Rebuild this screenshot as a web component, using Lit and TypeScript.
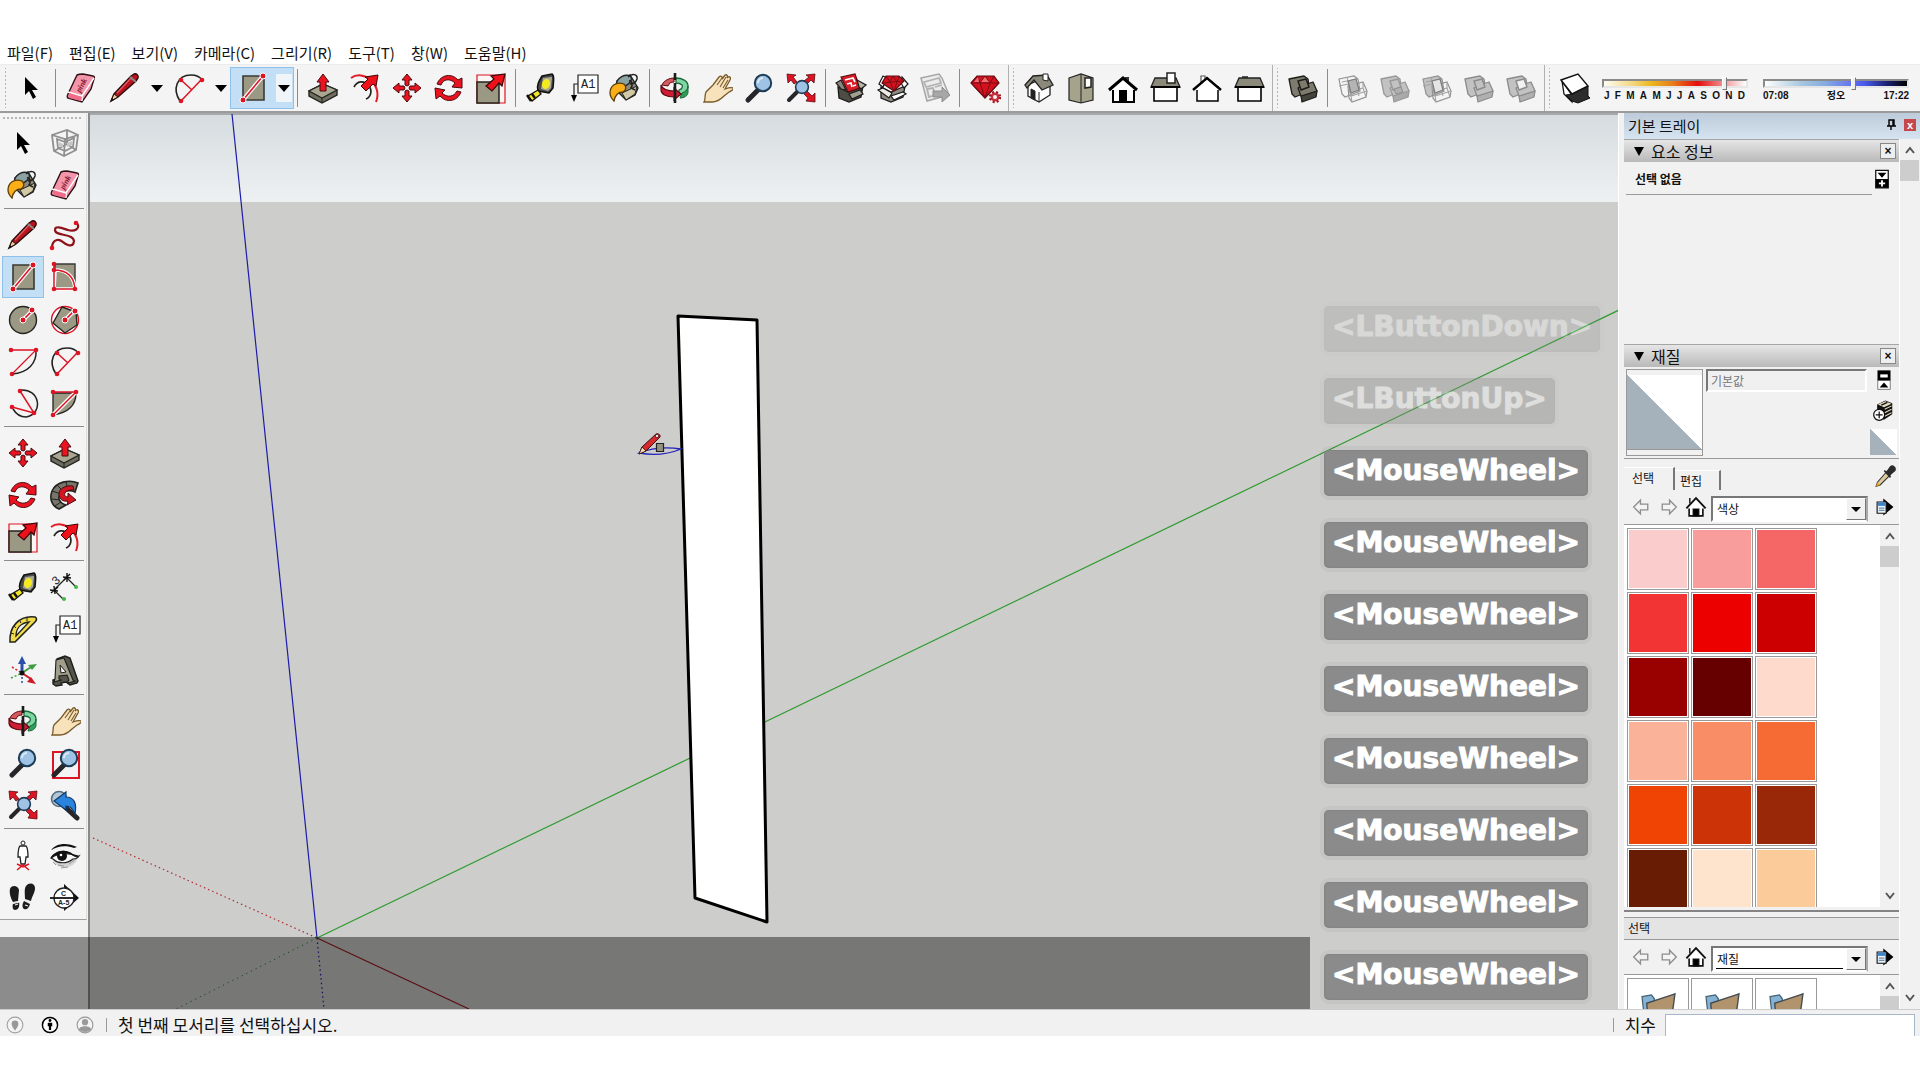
import { LitElement, html, css, svg, nothing } from "lit";
import { customElement, state } from "lit/decorators.js";
import { classMap } from "lit/directives/class-map.js";

const solid = (face: string, edge: string, stroke: string, mid = face) => svg`
  <path d="m2 7 15-3 4 3 2 12-15 6-3-3z" fill=${face} stroke=${stroke} stroke-width="1.3" stroke-linejoin="round"/>
  <path d="m14 24 16-5-1 6-14 5z" fill=${edge} stroke=${stroke} stroke-width="1.3" stroke-linejoin="round"/>
  <path d="m11 16 3-2 12-4 4 9-16 5z" fill=${face} stroke=${stroke} stroke-width="1.3" stroke-linejoin="round"/>
  <path d="m11 9 8-2 3 8-8 3z" fill=${mid} stroke=${stroke} stroke-width="1.5" stroke-linejoin="round"/>`;

const wire = (left: string, right: string, mid: string) => svg`
  <path d="m2 7 15-3 4 3 2 12-15 6-3-3z" fill=${left} stroke="#929292" stroke-width="1.2"/>
  <path d="m11 14 15-4 4 9-1 6-14 5-3-4z" fill=${right} stroke="#929292" stroke-width="1.2"/>
  <path d="m5 10 15-3M2 14l14-3M10 5l4 18M11 14l3 10 16-5M14 24l1 6M19 12l3 12M12 20l14-4 3 9M26 10v6" fill="none" stroke="#a2a2a2" stroke-width="1.1"/>
  <path d="m11 9 8-2 3 11-8 3z" fill=${mid} stroke="#7c7c7c" stroke-width="1.2"/>`;

const gem = (y: number) => svg`<g transform=${`translate(0 ${y})`}>
  <path d="m2 9 6-7h17l5 7-14 15z" fill="#d3121e" stroke="#5d0a10" stroke-width="1.2"/>
  <path d="M2 9h28l-14 15zM8 2l3 7 5-7 5 7 4-7M11 9l5 15 5-15" fill="none" stroke="#7a0d14" stroke-width="1"/>
  <path d="m9 3-4 5h5zM16 3l-4 5h8z" fill="#f26a72"/></g>`;

const dots = (pts: number[][], halo = false) =>
  pts.map(([x, y]) => svg`<circle cx=${x} cy=${y} r=${halo ? 3 : 2.3} fill="#dc1424" stroke=${halo ? "#fff" : "none"} stroke-width="1"/>`);

const lens = svg`
  <path d="m16 17-11 11" stroke="#26262a" stroke-width="5" stroke-linecap="round"/>
  <circle cx="20" cy="11" r="8.2" fill="#9fc3e4" stroke="#1d3c56" stroke-width="2"/>
  <path d="M15 11a5 5 0 0 1 5-5" fill="none" stroke="#dcebf7" stroke-width="2"/>`;

const bigArrow = svg`<path d="m30 2-3 12-3-3-7 8-6-5 8-7-3-3z" fill="#ee1119" stroke="#3a0508" stroke-width="1.2"/>`;

const ICONS: Record<string, unknown> = {
  select: svg`<path d="M10 5v18l4-4 4 8 3-2-4-7h6z" fill="#000"/>`,
  component: svg`<g fill="none" stroke="#8f8f8f" stroke-width="1.8"><path d="m3 8 15-5 11 5-2 15-12 6L5 24z"/><path d="m3 8 13 4 13-4M16 12l-1 17M18 3v14l9 6M18 17 5 24M8 12l8 3 9-4-1 9-8 4-7-3z"/></g><path d="m10 15 4 2v4l-4-2zM18 16l5-2v4l-5 2z" fill="#c6c6c6"/>`,
  paint: svg`
    <path d="M8 9 21 3l8 13-3 7-9 5-9-9z" fill="#8d8a7c" stroke="#222" stroke-width="1.4"/>
    <path d="m13 21 15-7-2 8-9 6z" fill="#d1c9a3" stroke="#222"/>
    <ellipse cx="15" cy="9" rx="8" ry="5" transform="rotate(-28 15 9)" fill="#8ba4a3" stroke="#222" stroke-width="1.4"/>
    <path d="M19 5c4-4 10-3 9 2-1 3-4 5-7 5" fill="none" stroke="#222" stroke-width="1.5"/>
    <path d="M20 9c3-1 4 4 2 7l4 2" fill="none" stroke="#222" stroke-width="1.6"/>
    <path d="M15 12C7 9 1 14 1 21c0 3 2 6 4 8 1-5 3-9 9-9 3-2 4-5 1-8z" fill="#fbae17" stroke="#5b3c05" stroke-width="1.3"/>`,
  eraser: svg`
    <path d="M12 3c2-1 4-1 6-1l10 2c1 0 2 1 1 3l-3 10-9 13-14-4c-1 0-1-2 0-4z" fill="#f595a9" stroke="#2d1016" stroke-width="1.4"/>
    <path d="m3 20 14 4 12-18M17 24v5" fill="none" stroke="#fff" stroke-width="1.4"/>
    <path d="M4 21 17 25l-1 4-12-3z" fill="#ef6d89"/>
    <text class="pink" x="11" y="20" transform="rotate(-62 14 17)">pink</text>`,
  pencil: svg`
    <path d="m22 4 3-2c2-1 5 1 4 4l-2 3L9 25l-7 4 3-7z" fill="#b8141e" stroke="#2a0b0c" stroke-width="1.4"/>
    <path d="m5 22 4 3-7 4z" fill="#e9cf9c" stroke="#2a0b0c"/><path d="m3 26 2 2-3 1z" fill="#111"/>
    <path d="M8 21 23 5" stroke="#e4565d" stroke-width="1.5"/><path d="m21 5 6 5" stroke="#8a8a8a" stroke-width="2"/>`,
  freehand: svg`<path d="M28 4c4 6-3 9-9 7S6 6 6 11s11 4 16 7 3 10-3 8-6-6-11-5c-4 1-5 4-5 8" fill="none" stroke="#8f1119" stroke-width="2.2"/>${dots([[27, 4], [3, 29]])}`,
  rect: svg`<path d="M6 4h21v24H6z" fill="#9b9983" stroke="#3a3a35" stroke-width="1.6"/><path d="M6 28 26 4" stroke="#fff" stroke-width="4"/><path d="M6 28 26 4" stroke="#dc1424" stroke-width="1.6"/>${dots([[6, 28], [26, 4]], true)}`,
  rotrect: svg`<path d="M6 3h20v24H6z" fill="#9b9983" stroke="#3a3a35" stroke-width="1.4"/><path d="M6 9c12 0 19 6 20 19H5z" fill="#9b9983" stroke="#fff" stroke-width="3.6"/><path d="M5 2v26h21C25 15 18 9 5 9" fill="none" stroke="#dc1424" stroke-width="1.5"/>${dots([[5, 3], [5, 9], [5, 28], [26, 28]])}`,
  circle: svg`<circle cx="16" cy="17" r="13.5" fill="#9b9983" stroke="#23231f" stroke-width="1.4"/><path d="m16 17 9-9" stroke="#fff" stroke-width="4"/><path d="m16 17 9-9" stroke="#dc1424" stroke-width="1.7"/>${dots([[16, 17], [25, 7]], true)}`,
  polygon: svg`<circle cx="16" cy="17" r="13.5" fill="#fff" stroke="#dc1424" stroke-width="1.4"/><path d="M13 4 27 9l1 13-12 8L4 20z" fill="#9b9983" stroke="#23231f" stroke-width="1.4"/><path d="m16 17 9-9" stroke="#fff" stroke-width="4"/><path d="m16 17 9-9" stroke="#dc1424" stroke-width="1.7"/>${dots([[16, 17], [26, 8]], true)}`,
  arc: svg`<path d="M29 5c1 13-8 23-24 24" fill="none" stroke="#23231f" stroke-width="1.5"/><path d="M4 5h25L5 29" fill="none" stroke="#dc1424" stroke-width="1.3"/>${dots([[4, 5], [29, 5], [5, 29]])}`,
  arc2: svg`<path d="M7 29C-1 17 4 3 18 3c6 0 9 2 11 5" fill="none" stroke="#23231f" stroke-width="1.6"/><path d="M8 29 28 8M8 8l11 10" fill="none" stroke="#dc1424" stroke-width="1.5"/>${dots([[8, 29], [29, 8], [8, 8]])}`,
  arc3: svg`<path d="M13 3c20-2 24 24 6 27-6 0-10-3-13-8" fill="none" stroke="#23231f" stroke-width="1.5"/><path d="m13 4 14 22L5 20" fill="none" stroke="#dc1424" stroke-width="1.5"/>${dots([[13, 4], [27, 26], [5, 20]])}`,
  pie: svg`<path d="M4 6h23c0 13-9 20-23 22z" fill="#9b9983" stroke="#23231f" stroke-width="1.3"/><path d="M4 28 27 5" stroke="#fff" stroke-width="4"/><path d="M4 5h23L4 28" fill="none" stroke="#dc1424" stroke-width="1.5"/>${dots([[4, 5], [27, 5], [4, 28]])}`,
  move: svg`<path d="m16 2 5 6h-3v5l-2 1-2-1V8h-3zM16 30l-5-6h3v-5l2-1 2 1v5h3zM2 16l6-5v3h5l1 2-1 2H8v3zM30 16l-6 5v-3h-5l-1-2 1-2h5v-3z" fill="#ea1420" stroke="#4a0a0e" stroke-width="1"/>`,
  push: svg`<path d="m2 19 14-7 14 6v5L15 31 2 24z" fill="#6e6d60" stroke="#23231f" stroke-width="1.4"/><path d="m2 19 14-7 14 6-15 8z" fill="#a9a791" stroke="#23231f" stroke-width="1.2"/><path d="M15 26v5" stroke="#23231f"/><path d="m16 2 6 8h-3v9h-6v-9h-3z" fill="#ea1420" stroke="#4a0a0e"/>`,
  rotate: svg`<g fill="#ea1420" stroke="#4a0a0e" stroke-width="1"><path d="M4 12C8 2 19 1 25 8l4-2v10l-10-1 3-4C17 6 10 7 8 13z"/><path d="M28 20c-4 10-15 11-21 4l-4 3-1-11 10 2-3 3c5 5 12 4 15-2z"/></g>`,
  followme: svg`<path d="M29 4c-9-4-22-1-26 8-3 8 0 15 7 18l7-4c-7-2-9-8-5-12 4-3 11-3 14-1z" fill="#77766a" stroke="#23231f" stroke-width="1.6"/><path d="m3 12 9 3M8 6l6 6M17 3l2 8M3 20l8 1M6 27l6-4" stroke="#23231f"/><path d="M24 7c-8-1-14 3-14 8s4 8 9 7l-1 4 9-5-8-7v4c-3 0-4-2-3-4 2-3 5-3 9-3z" fill="#d41623" stroke="#4a0a0e"/>`,
  scale: svg`<path d="M2 3h28v28H2z" fill="#fbf5f4" stroke="#dc1424" stroke-width="1.2"/><path d="M2 10h22v21H2z" fill="#9b9983" stroke="#23231f" stroke-width="1.5"/>${bigArrow}`,
  offset: svg`<path d="M2 6C14-3 34 12 27 30" fill="none" stroke="#e01c28" stroke-width="2"/><path d="M5 15c3-6 10-7 14-2 5 5 3 12-2 14" fill="none" stroke="#23231f" stroke-width="1.7"/><path d="m29 3-2 11-3-2-7 7-5-5 7-7-3-2z" fill="#ee1119" stroke="#3a0508"/>`,
  tape: svg`<path d="m17 4 10-2c2 1 2 4 1 14l-4 5-11-2c-2-5 1-10 4-15z" fill="#4b4b46" stroke="#111" stroke-width="1.5"/><path d="m18 6 9-1-1 11-3 3-7-2z" fill="#a9a99c"/><ellipse cx="21" cy="12" rx="4" ry="5" transform="rotate(20 21 12)" fill="#f4ea1e"/><path d="m13 18 3 4-9 7-4-5z" fill="#f1e524" stroke="#111" stroke-width="1.3"/><path d="m2 23 4 6M7 22l3 4" stroke="#111" stroke-width="2.4"/>`,
  dim: svg`<path d="m5 19 13-13" stroke="#23231f" stroke-width="1.2"/><path d="m5 19 9 9M18 7l8 8" stroke="#23231f" stroke-width="1.2"/><path d="m1 19 8 1M5 15l1 8M2 22l7-6M14 6l8 1M18 2v9M15 9l6-6" stroke="#111" stroke-width="1.400"/><text class="tag thin" x="3" y="13" transform="rotate(-42 7 9)">3</text><circle cx="15" cy="28" r="2" fill="#44b548"/><circle cx="27" cy="16" r="2" fill="#44b548"/>`,
  protractor: svg`<path d="M3 29C2 14 12 2 28 4c2 1 2 3 0 5L8 29z" fill="#f0dc4b" stroke="#23231f" stroke-width="1.6"/><path d="M9 23c0-8 5-13 13-14z" fill="#f3f3f3" stroke="#23231f" stroke-width="1.4"/><path d="m4 20 3 1M7 13l2 2M13 8l1 2M20 5v3" stroke="#23231f"/>`,
  label: svg`<path d="M11 3h20v18H11z" fill="#fff" stroke="#222" stroke-width="1.2"/><path d="M11 12H7v12" fill="none" stroke="#222" stroke-width="1.2"/><path d="m4 23 3 7 3-7z" fill="#000"/><text class="tag thin" x="14" y="16">A1</text>`,
  axes: svg`<path d="M15 18V8" stroke="#2a50a8" stroke-width="3"/><path d="m15 1 4 8h-8z" fill="#2a50a8"/><path d="m15 18 9-6" stroke="#3f9c42" stroke-width="2"/><path d="m30 9-5 6-4-5z" fill="#3f9c42"/><path d="m15 18 9 6" stroke="#cf1826" stroke-width="2"/><path d="m29 29-9-2 4-5z" fill="#cf1826"/><path d="M15 18v12" stroke="#2a50a8" stroke-width="1.5" stroke-dasharray="2 2"/><path d="m5 12 10 6" stroke="#cf1826" stroke-width="1.5" stroke-dasharray="2 2"/><path d="m4 23 9-4" stroke="#3f9c42" stroke-width="1.5" stroke-dasharray="2 2"/><circle cx="15" cy="18" r="2.5" fill="#111"/>`,
  text3d: svg`<path d="m8 4 8-3 5 2 8 23-1 2-7 2-4-3-5 1 1 2-6 1-3-2V25l3-1z" fill="#55544b" stroke="#1d1d1a" stroke-width="1.4"/><path d="m7 5 8-2 9 22 2 1-7 2v-2l1-1-2-5-8 1v3l2 1-7 2 1-3z" fill="#a09e8a" stroke="#1d1d1a" stroke-width="1.1"/><path d="m11 10 1 8 5-1z" fill="#f4f4f4" stroke="#1d1d1a"/>`,
  orbit: svg`<path d="M3 13c2-5 8-7 12-7v4c-3 0-5 1-6 4z" fill="#d4585c" stroke="#5d0a10"/><path d="M17 6c6 0 12 3 12 8 0 6-5 8-9 9v-5c3-1 4-3 3-5-2-2-4-2-6-2z" fill="#7fd6a0" stroke="#1e6a3d" stroke-width="1.3"/><path d="M23 21c3-1 6-3 6-7v6c0 4-4 6-8 6z" fill="#2f9e58" stroke="#1e6a3d"/><path d="M2 13c1 4 7 6 13 6v-3l7 6-7 6v-3C7 25 2 22 2 18z" fill="#cf1d33" stroke="#5d0a10" stroke-width="1.2"/><path d="M16 1v7M16 11v20" stroke="#1b1b1b" stroke-width="2.6"/>`,
  hand: svg`<path d="M3 30c2-3 0-6 2-10l7-7 6-8c2-2 4 0 3 2l3-4c2-1 3 1 2 3l1-1c2-1 3 1 2 3l-5 9c3-1 6-2 8-1 1 2-2 3-4 4l-5 4c-3 3-7 6-12 6z" fill="#f7e2bb" stroke="#7a5a2a" stroke-width="1.3"/><path d="m16 13 5-7M19 15l6-10M22 16l5-8" stroke="#7a5a2a" stroke-width="1.1"/>`,
  zoom: lens,
  zoomwin: svg`<path d="M4 5h26v26H4z" fill="none" stroke="#dc1424" stroke-width="2"/>${lens}`,
  zoomext: svg`<g fill="#dc1424" stroke="#5d0a10" stroke-width=".8"><path d="m2 2 9 1-3 2 4 5-3 2-3-4-3 3zM30 2l-1 9-3-3-4 4-3-3 5-4-3-2zM30 30l-9-1 2-3-4-4 3-3 5 5 3-3z"/></g><path d="m13 19-9 9" stroke="#26262a" stroke-width="4" stroke-linecap="round"/><circle cx="17" cy="15" r="6.4" fill="#9fc3e4" stroke="#1d3c56" stroke-width="1.6"/>`,
  previous: svg`<circle cx="10" cy="10" r="7.5" fill="#b4c9d8" stroke="#56707f" stroke-width="1.6"/><path d="m15 17 13 12" stroke="#26262a" stroke-width="5" stroke-linecap="round"/><path d="m5 12 12-9v5c8 0 11 6 9 17-3-6-5-8-9-8v4z" fill="#2a84dd" stroke="#143b66" stroke-width="1.2"/>`,
  poscam: svg`<circle cx="16" cy="4" r="2" fill="#fff" stroke="#222"/><path d="M13 7h6c2 2 2 6 2 11h-2l-1 7h-4l-1-7h-2c0-5 0-9 2-11z" fill="#fff" stroke="#222" stroke-width="1.3"/><path d="m10 31 6-5 6 5M10 25l6 3 6-3" fill="none" stroke="#dc1424" stroke-width="1.5"/>`,
  look: svg`<path d="M4 20c2 9 15 12 23 3l3-8-6 5z" fill="#d4d4d4"/><path d="M2 11c5-7 16-8 26-3l-3 1C17 6 9 7 2 11z" fill="#111"/><path d="M2 19c5-7 14-9 22-3 2 2 4 2 6 1-2 3-4 3-6 3-6 5-15 5-20 0z" fill="#f9f9f9" stroke="#222" stroke-width="1.200"/><path d="M2 19c5-7 14-9 22-3l5 1c-9-3-18-4-27 2z" fill="#111" stroke="#111" stroke-width="1.200"/><circle cx="13" cy="17" r="5" fill="#111"/><circle cx="12" cy="16" r="1.300" fill="#fff"/><path d="m4 23 3 3M9 26l6 1M20 25l7-5M12 29l7-1" stroke="#999"/>`,
  walk: svg`<g fill="#1c1c1c"><path d="M3 8c1-4 8-4 9 1l-1 11-5 1c-2-3-4-9-3-13zM6 23l6-2c1 5-1 8-4 8-2 0-3-3-2-6z"/><path d="M19 5c3-4 9-3 9 2 0 5-3 8-4 13l-6-2c0-5-1-10 1-13zM17 20l6 3c-1 4-3 6-6 5-2-1-2-5 0-8z"/></g><path d="m6 22 6-1M17 19l7 3M8 24l3-1M18 24l3 1" stroke="#e8e8e8" stroke-width="1.3"/>`,
  section: svg`<path d="M15 3 30 17 15 30z" fill="#111"/><circle cx="15" cy="17" r="10" fill="#fff" stroke="#222" stroke-width="1.3"/><path d="M1 17h27" stroke="#111" stroke-width="1.8"/><text class="mini" x="12" y="15">C</text><text class="mini" x="9" y="24">A-5</text>`,
  warehouse: svg`<path d="m3 15 10 5 15-6-2 11-12 5-10-4z" fill="#4f4c43" stroke="#1a1a1a" stroke-width="1.3"/><path d="m6 5 14-3 5 14-12 4z" fill="#d81c28" stroke="#5d0a10" stroke-width="1.2"/><path d="m10 8 8-2 2 4M12 12l4-1 1 4M18 14l3-1" fill="none" stroke="#fff" stroke-width="1.7"/><path d="m1 11 5-3 5 10-5-1z" fill="#8a877b" stroke="#1a1a1a" stroke-width="1.2"/><path d="m22 8 9 5-5 4-2-2z" fill="#b9b5a2" stroke="#1a1a1a" stroke-width="1.2"/><path d="m14 22 11-4 3 4-11 5z" fill="#a29f8f" stroke="#1a1a1a" stroke-width="1.2"/>`,
  gembox: svg`<path d="m4 15 10 5 14-6-2 11-12 5-10-4z" fill="#8f8c80" stroke="#1a1a1a" stroke-width="1.3"/><path d="m2 12 4-8 4 2-4 9zM25 5l6 7-4 4-3-5z" fill="#fff" stroke="#1a1a1a" stroke-width="1.2"/><path d="m5 11 4-7h13l5 5-10 10z" fill="#d3121e" stroke="#5d0a10" stroke-width="1.2"/><path d="M5 11l22-2M9 4l4 6 3-6 4 6 2-6M13 10l4 9 3-9" fill="none" stroke="#7a0d14"/><path d="m1 18 5-2 9 5-3 5z" fill="#eceae2" stroke="#1a1a1a" stroke-width="1.2"/><path d="m14 24 12-4 3 2-12 6z" fill="#fff" stroke="#1a1a1a" stroke-width="1.2"/>`,
  layout: svg`<path d="m2 6 18-4 3 4 7 17-22 6z" fill="#ececec" stroke="#a5a5a5" stroke-width="1.5"/><path d="m5 10 15-4 2 5-15 4zM8 17l6-1 2 7-6 2zM16 15l7-2" fill="none" stroke="#b1b1b1" stroke-width="1.8"/><path d="M14 19h9v-4l8 8-8 7v-5h-9z" fill="#a7a7a7" stroke="#8e8e8e"/>`,
  ruby: svg`${gem(2)}<circle cx="26" cy="25" r="5" fill="#c8323d" stroke="#fff" stroke-width="1"/><circle cx="26" cy="25" r="5" fill="none" stroke="#a3141f" stroke-width="2.4" stroke-dasharray="2 2"/><circle cx="26" cy="25" r="2" fill="#f4f4f4"/>`,
  iso: svg`<path d="M5 13v11l11 6 11-7V12l-7-6z" fill="#fff" stroke="#222" stroke-width="1.3"/><path d="m2 13 8-9 14-1 6 10-11 5-8-10-7 8z" fill="#8a897a" stroke="#222" stroke-width="1.3"/><path d="M16 20v10M8 17l4 2v9l-4-2z" fill="#222" stroke="#222"/><path d="M20 2h5v7l-5-1z" fill="#fff" stroke="#222"/>`,
  top: svg`<path d="m4 6 12-4 12 4v22l-12 3-12-3z" fill="#a5a38c" stroke="#222" stroke-width="1.2"/><path d="M16 2v29" stroke="#222"/><path d="M20 6h6v9l-6 1z" fill="#fff" stroke="#222" stroke-width="1.5"/>`,
  front: svg`<path d="M6 15h21v15H6z" fill="#fff" stroke="#000" stroke-width="2"/><path d="M18 5h4v5h-4z" fill="#333"/><path d="m2 18 14-12 14 12" fill="#fff" stroke="#000" stroke-width="3"/><path d="M12 18h8v12h-8z"/>`,
  right: svg`<path d="M5 14h23v15H5z" fill="#fff" stroke="#000" stroke-width="1.600"/><path d="M6 6h21l4 9H2z" fill="#8a897a" stroke="#222" stroke-width="1.3"/><path d="M2 15h29" stroke="#000" stroke-width="2"/><path d="M18 1h8v10h-8z" fill="#fff" stroke="#222" stroke-width="1.5"/>`,
  back: svg`<path d="M6 15h21v14H6z" fill="#fff" stroke="#000" stroke-width="1.500"/><path d="M10 4h4v8h-4z" fill="#fff" stroke="#555" stroke-width="1.200"/><path d="m2 18 14-12 14 12" fill="#fff" stroke="#000" stroke-width="2.400"/>`,
  left: svg`<path d="M5 14h23v15H5z" fill="#fff" stroke="#000" stroke-width="1.600"/><path d="M9 4h6v3H9z" fill="#555"/><path d="M6 6h21l4 9H2z" fill="#8a897a" stroke="#222" stroke-width="1.300"/><path d="M2 15h29" stroke="#000" stroke-width="2"/>`,
  shell: solid("#7d7b6d", "#45443c", "#1d1d1a"),
  intersect: wire("none", "none", "#b4b4b4"),
  union: svg`${solid("#c2c2c2", "#aaa", "#999")}<path d="m15 17 7-2 2 5-7 2z" fill="#b0b0b0" stroke="#8f8f8f"/>`,
  subtract: wire("#c2c2c2", "none", "#e4e4e4"),
  trim: solid("#c2c2c2", "#b0b0b0", "#8c8c8c"),
  split: solid("#c2c2c2", "#b0b0b0", "#8c8c8c", "#f2f2f2"),
  shadow: svg`<path d="m3 9 10 14v7l-8-8z" fill="#fff" stroke="#111" stroke-width="1.3"/><path d="m13 22 16-8v10l2 2-12 5-6-2-6-6z" fill="#2c2c2c" stroke="#111"/><path d="M2 8 19 2l10 12-16 8z" fill="#fff" stroke="#111" stroke-width="1.4"/>`,
  addbox: svg`<path d="M6 8 18 2l10 4v16l-12 8-10-5z" fill="#111"/><path d="m9 8 9-4 7 3-9 4zM17 15l10-5M17 20l10-5M17 25l10-5" fill="#e6dfc0" stroke="#e6dfc0" stroke-width="1.5"/><path d="m12 9 9-4" stroke="#111" stroke-width="2"/><circle cx="9" cy="23" r="8" fill="#fff" stroke="#111" stroke-width="1.800"/><path d="M9 18v10M4 23h10" stroke="#111" stroke-width="1.8"/>`,
  dropper: svg`<path d="m19 9 5 5L9 29l-6 2 2-6z" fill="#dccb9c" stroke="#333" stroke-width="1.500"/><path d="m5 25 4 4-6 2z" fill="#e7a512"/><path d="m15 8 9 10M19 10l5-7c3-3 8 1 6 5l-7 6z" fill="#2b2b2b" stroke="#2b2b2b" stroke-width="2.5"/>`,
  home: svg`<path d="M6 16v13h20V16" fill="#fff" stroke="#111" stroke-width="2.400"/><path d="m2 18 14-15 14 15" fill="#fff" stroke="#111" stroke-width="2.800"/><path d="M7 11V3M12 19h8v10h-8z" stroke="#111" stroke-width="2"/>`,
  prevArrow: svg`<path d="M3 16 15 4v7h13v10H15v7z" fill="#f4f4f4" stroke="#8e8e8e" stroke-width="2.400"/>`,
  nextArrow: svg`<path d="M29 16 17 4v7H4v10h13v7z" fill="#f4f4f4" stroke="#8e8e8e" stroke-width="2.400"/>`,
  details: svg`<path d="M13 1 31 16 13 31z" fill="#000"/><path d="M2 7h16v20H2z" fill="#eaf2fa" stroke="#111" stroke-width="2"/><path d="M3 8h14v6H3z" fill="#3d83c9"/><path d="M5 18h10M5 22h10" stroke="#6d8ca8" stroke-width="2"/>`,
  pane: svg`<path d="M6 2h20v28H6z" fill="#fff" stroke="#111" stroke-width="2"/><path d="M6 16h20v14H6z" fill="#000"/><path d="M9 6h14l-7 8z"/><path d="M16 18v10M11 23h10" stroke="#fff" stroke-width="3"/>`,
  paneUp: svg`<path d="M6 1h20v30H6z" fill="#fff" stroke="#777" stroke-width="1.500"/><path d="M6 1h20v16H6z" fill="#000"/><path d="M10 7h12v5H10z" fill="#fff"/><path d="m16 20 7 8H9z"/>`,
  folder: svg`<path d="m2 5 10-2 3 4 2 25H5z" fill="#85b3d6" stroke="#44606f" stroke-width="1.300"/><path d="M7 12 34 3l3-1-4 30H9z" fill="#b1946d" stroke="#454d52" stroke-width="1.500"/>`,
  geo: svg`<circle cx="16" cy="16" r="14" fill="#f4f4f4" stroke="#a3a3a3" stroke-width="2"/><path d="M16 26c-3-5-6-8-6-12a6 6 0 0 1 12 0c0 4-3 7-6 12z" fill="#989898"/>`,
  credit: svg`<circle cx="16" cy="16" r="13.500" fill="#fff" stroke="#000" stroke-width="2.600"/><circle cx="16" cy="8" r="2.500"/><path d="M12 12h8v6h-2v7h-4v-7h-2z"/>`,
  user: svg`<circle cx="16" cy="16" r="14" fill="#f4f4f4" stroke="#999" stroke-width="2"/><circle cx="16" cy="11" r="5.500" fill="#999"/><path d="M5 24c1-8 21-8 22 0-5 6-17 6-22 0z" fill="#999"/>`,
};

const icon = (name: string, cls = "") =>
  html`<svg class="icon ${cls}" viewBox="0 0 32 32" aria-hidden="true">${ICONS[name]}</svg>`;

const chevron = (down: boolean) =>
  html`<svg class="chev" viewBox="0 0 10 8" aria-hidden="true"><path d=${down ? "M1 1l4 5 4-5" : "M1 7l4-5 4 5"} /></svg>`;

type Tool = [string, string];
const SEP: Tool = ["|", ""];

const MENUS = ["파일(F)", "편집(E)", "보기(V)", "카메라(C)", "그리기(R)", "도구(T)", "창(W)", "도움말(H)"];

const MAIN_TOOLS: Tool[] = [
  ["select", "선택"], SEP, ["eraser", "지우개"], ["pencil+", "선"], ["arc2+", "호"], ["rect+", "직사각형"], SEP,
  ["push", "밀기/끌기"], ["offset", "오프셋"], ["move", "이동"], ["rotate", "회전"], ["scale", "배율"], SEP,
  ["tape", "줄자"], ["label", "텍스트"], ["paint", "페인트 통"], SEP,
  ["orbit", "궤도"], ["hand", "이동 보기"], ["zoom", "확대/축소"], ["zoomext", "범위 확대"], SEP,
  ["warehouse", "3D Warehouse"], ["gembox", "Extension Warehouse"], ["layout", "LayOut"], SEP, ["ruby", "확장"],
];
const VIEW_TOOLS: Tool[] = [["iso", "등각"], ["top", "위"], ["front", "앞"], ["right", "오른쪽"], ["back", "뒤"], ["left", "왼쪽"]];
const SOLID_TOOLS: Tool[] = [["shell", "외부 쉘"], SEP, ["intersect", "교차"], ["union", "결합"], ["subtract", "빼기"], ["trim", "자르기"], ["split", "분할"]];

const SIDE_TOOLS: Tool[][] = [
  [["select", "선택"], ["component", "구성 요소"], ["paint", "페인트 통"], ["eraser", "지우개"]],
  [["pencil", "선"], ["freehand", "자유선"], ["rect", "직사각형"], ["rotrect", "회전 직사각형"], ["circle", "원"], ["polygon", "다각형"], ["arc", "호"], ["arc2", "2점 호"], ["arc3", "3점 호"], ["pie", "파이"]],
  [["move", "이동"], ["push", "밀기/끌기"], ["rotate", "회전"], ["followme", "따라가기"], ["scale", "배율"], ["offset", "오프셋"]],
  [["tape", "줄자"], ["dim", "치수"], ["protractor", "각도기"], ["label", "텍스트"], ["axes", "축"], ["text3d", "3D 텍스트"]],
  [["orbit", "궤도"], ["hand", "이동 보기"], ["zoom", "확대/축소"], ["zoomwin", "확대 창"], ["zoomext", "범위 확대"], ["previous", "이전"]],
  [["poscam", "카메라 배치"], ["look", "둘러보기"], ["walk", "걷기"], ["section", "단면"]],
];

const SWATCHES = [
  "#fbcccc", "#f99c9c", "#f56666", "#f23434", "#ec0000", "#cc0000", "#990000", "#660000", "#fddacc",
  "#fab299", "#f98e66", "#f66a34", "#f04404", "#cc3408", "#992808", "#681c04", "#fee4cc", "#fbcc99",
];

const KEYS: [string, string][] = [
  ["<LButtonDown>", "fade-most"], ["<LButtonUp>", "fade"],
  ...Array.from({ length: 8 }, () => ["<MouseWheel>", ""] as [string, string]),
];

@customElement("app-root")
export class AppRoot extends LitElement {
  @state() private tool = "rect";
  @state() private tab = "선택";

  static styles = css`
    :host { display: block; font-family: "Noto Sans CJK KR", "Noto Sans", sans-serif; color: #111; }
    * { box-sizing: border-box; }
    button { font: inherit; color: inherit; background: none; border: 0; padding: 0; margin: 0; display: flex; align-items: center; justify-content: center; }
    .page { height: 100vh; display: flex; flex-direction: column; background: #fff; padding: 41px 0 44px; overflow: hidden; }
    .icon { width: 32px; height: 32px; display: block; }
    .pink { font: italic 700 8px "Liberation Serif", serif; fill: #7c1630; }
    .tag { font: 700 12px "Liberation Mono", monospace; fill: #222; }
    .tag.thin { font-weight: 400; }
    .mini { font: 700 7px "Liberation Sans", sans-serif; fill: #222; }

    .menu { display: flex; gap: 16px; padding: 0 7px; height: 23px; font-size: 15px; line-height: 24px; }
    .menu button { white-space: nowrap; line-height: 24px; }

    .bars { display: flex; height: 49px; background: #f4f4f4; border-top: 1px solid #ececec; border-bottom: 2px solid #9b9b9b; }
    .group { display: flex; align-items: center; padding-right: 2px; border-right: 1px solid #b0b0b0; }
    .group:first-child { padding-left: 1px; }
    .group:last-child { flex: 1; border-right: 0; }
    .grip { width: 9px; align-self: stretch; margin: 3px 0; background: radial-gradient(circle, #b5b5b5 1px, transparent 1px) center / 9px 4px repeat-y; }
    .tool { width: 42px; height: 42px; }
    .sep { width: 1px; height: 38px; background: #8c8c8c; margin: 0 4px 0 3px; }
    .combo { display: flex; width: 64px; height: 42px; }
    .combo .tool { width: 46px; }
    .drop { width: 18px; }
    .tri { border: 6px solid transparent; border-top: 7px solid #000; border-bottom: 0; }
    .combo.on, .side .on { background: #c3dff5; box-shadow: inset 0 0 0 1px #8fc0ea; }
    .combo.on .drop { align-self: center; width: 16px; height: 28px; background: #f0f5fa; margin-left: 0; }
    .time { display: flex; gap: 15px; padding: 12px 9px 0 6px; align-self: flex-start; flex: 1; }
    .scale { flex: 1; min-width: 0; display: flex; flex-direction: column; font: 700 10px/12px "Liberation Sans", "Noto Sans CJK KR", sans-serif; }
    .ticks { display: flex; justify-content: space-between; padding: 0 3px 0 2px; }
    .ticks.wide { padding: 0; }
    .range { appearance: none; -webkit-appearance: none; width: 100%; height: 13px; margin: 0; background: none; display: block; }
    .range::-webkit-slider-runnable-track { height: 9px; border: 2px solid; border-color: #8a8a8a #e6e6e6 #e6e6e6 #8a8a8a; }
    .months::-webkit-slider-runnable-track { background: linear-gradient(90deg, #fffdf4, #f3d680 20%, #ecb820 33%, #e87f1a 48%, #e60c0c 66%, #f0a0a0 86%, #fff); }
    .hours::-webkit-slider-runnable-track { background: linear-gradient(90deg, #fff, #a5c6de 26%, #86ace0 42%, #6a7cec 58%, #4a5aec 70%, #1a2070 86%, #000); }
    .range::-webkit-slider-thumb { -webkit-appearance: none; width: 5px; height: 13px; margin-top: -4px; background: #f0f0f0; border: 1px solid; border-color: #fff #777 #777 #fff; }

    .main { flex: 1; min-height: 0; display: flex; position: relative; background: #f1f1f1; }
    .side { width: 90px; padding: 1px 0 0; border-right: 2px solid #8a8a8a; background: #f1f1f1; }
    .palette { width: 87px; padding: 0 0 1px 2px; background: #f4f4f4; border-bottom: 1px solid #a0a0a0; border-right: 1px solid #ddd; }
    .hgrip { height: 8px; margin-right: 3px; background: radial-gradient(circle, #b5b5b5 1px, transparent 1px) left center / 4px 8px repeat-x; }
    .cells { display: grid; grid-template-columns: 42px 42px; }
    .hsep { height: 1px; margin: 2px 2px 5px; background: #8c8c8c; }

    .view { flex: 1; min-width: 0; position: relative; overflow: hidden; background: #cdcdcc; border-right: 1px solid #fff; }
    .scene { position: absolute; inset: 0; width: 100%; height: 100%; display: block; }
    .keys { position: absolute; right: 14px; bottom: 9px; width: 280px; display: flex; flex-direction: column; align-items: flex-start; gap: 26px; }
    .key { height: 46px; padding: 0 8px; border-radius: 5px; background: #8b8b8b; color: #fff; font: 700 28px/42px "DejaVu Sans", sans-serif; -webkit-text-stroke: 1px #fff; box-shadow: 0 0 0 4px rgba(0, 0, 0, .035), inset 0 0 2px #777; white-space: nowrap; }
    .fade { opacity: .34; }
    .fade-most { opacity: .22; }
    .shade { position: absolute; left: 0; bottom: 0; width: 1310px; height: 72px; background: rgba(0, 0, 0, .42); }

    .tray { width: 301px; display: flex; flex-direction: column; padding-left: 5px; background: #f1f1f1; font-size: 12px; min-height: 0; }
    .title { display: flex; align-items: center; height: 26px; padding: 0 4px 2px 4px; background: linear-gradient(#bdcbda, #d6e3f0); font-size: 15px; flex: none; }
    .title span { flex: 1; }
    .pin { width: 12px; height: 12px; margin-right: 7px; }
    .x { width: 12px; height: 12px; background: #c4484c; color: #fff; font: 700 11px/12px "Liberation Sans", sans-serif; }
    .body { flex: 1; min-height: 0; display: flex; padding-right: 1px; }
    .stack { flex: 1; min-width: 0; display: flex; flex-direction: column; border-right: 1px solid #fff; }
    .bar { display: flex; align-items: center; gap: 7px; height: 23px; flex: none; padding: 0 3px 0 10px; background: linear-gradient(#e6e6e6, #b9b9b9); border-top: 1px solid #a5a5a5; font-size: 16px; line-height: 20px; }
    .bar .tri { border-width: 9px 5px 0; }
    .bar span { flex: 1; }
    .bar button { width: 16px; height: 16px; background: #eee; border: 1px solid #888; font: 700 12px/12px "Liberation Sans", sans-serif; }
    .info { height: 182px; flex: none; padding: 4px 7px 0 2px; }
    .info-row { display: flex; justify-content: space-between; align-items: center; height: 28px; padding: 0 0 3px 9px; font-weight: 700; }
    .info hr { border: 0; height: 1px; background: #9a9a9a; margin: 0 20px 0 0; }
    .icon.xs { width: 18px; height: 18px; }
    .icon.sm { width: 20px; height: 20px; }
    .icon.md { width: 22px; height: 22px; }
    .mat { display: flex; gap: 3px; height: 92px; flex: none; padding: 2px 2px 3px; border-bottom: 1px solid #999; }
    .preview { width: 77px; height: 87px; padding: 5px 0; border: 1px solid #999; }
    .diag { height: 100%; background: linear-gradient(to top right, #a5b2bc 50%, #fff 50%); }
    .preview .diag { border-bottom: 1px solid #999; }
    .name { flex: 1; min-width: 0; height: 23px; border: 2px solid; border-color: #777 #fff #fff #777; background: #f0f0f0; color: #777; font: 12px "Noto Sans CJK KR", sans-serif; padding: 0 3px; }
    .acts { width: 27px; display: flex; flex-direction: column; align-items: center; justify-content: space-between; padding-top: 1px; }
    .acts .diag { width: 27px; height: 26px; }
    .tabs { display: flex; align-items: flex-end; height: 31px; flex: none; padding-right: 3px; }
    .tabs .tab { width: 46px; height: 20px; justify-content: flex-start; padding-left: 5px; border-top: 1px solid #fff; border-right: 2px solid #777; font-size: 12px; }
    .tabs .tab.on { width: 51px; height: 23px; padding: 0 0 3px 8px; }
    .tabs .pick { margin-left: auto; padding-bottom: 3px; }
    .nav { display: flex; align-items: center; height: 35px; flex: none; padding: 0 3px 1px 8px; border-bottom: 1px solid #999; }
    .nav .icon { width: 18px; height: 18px; }
    .nav .icon.home { width: 22px; height: 22px; }
    .nav button { width: 27px; }
    .nav button:first-child { width: 18px; margin-right: 5px; }
    .nav button:last-child { width: 22px; margin-left: 6px; }
    .nav button:last-child .icon { width: 18px; height: 20px; }
    .pickbox { flex: 1; min-width: 0; height: 26px; display: flex; align-self: flex-end; align-items: center; border: 2px solid; border-color: #777 #aaa #fff #777; background: #fff; margin: 0 0 1px 2px; }
    .pickbox select { flex: 1; min-width: 0; appearance: none; border: 0; background: none; padding: 0 4px; font: 12px/18px "Noto Sans CJK KR", sans-serif; color: #111; height: 20px; }
    .pickbox.line select { margin: 0 3px; padding: 0 1px; border-bottom: 1px solid #000; }
    .pickbox .arrow { width: 20px; height: 22px; display: flex; align-items: center; justify-content: center; background: #f1f1f1; border: 1px solid; border-color: #fff #777 #777 #fff; }
    .arrow .tri { border-width: 5px 5px 0; }
    .list { display: flex; min-height: 0; background: #fff; overflow: hidden; }
    .colors { flex: 1; }
    .folders { flex: none; height: 34px; }
    .grid { flex: 1; display: grid; grid-template-columns: repeat(auto-fill, 62px); grid-auto-rows: 62px; gap: 2px; padding: 3px; align-content: start; }
    .sw { border: 1px solid #999; background: #fff; padding: 1px; align-items: stretch; justify-content: stretch; }
    .sw i { flex: 1; display: block; }
    .sw svg { width: 36px; height: 32px; margin: 12px auto 0; overflow: visible; }
    .scroll { width: 19px; flex: none; display: flex; flex-direction: column; align-items: center; background: #f1f1f1; }
    .scroll .chev { margin: 7px 0 6px; }
    .thumb { width: 100%; height: 21px; background: #cdcdcd; }
    .scroll .chev:last-child { margin: auto 0 7px; }
    .chev { width: 10px; height: 8px; flex: none; }
    .chev path { fill: none; stroke: #555; stroke-width: 2; }
    .split { flex: none; height: 8px; border-top: 2px solid #848484; border-bottom: 1px solid #999; margin-top: 3px; }
    .sub { flex: none; height: 22px; padding-left: 4px; background: #e4e4e4; border-bottom: 1px solid #999; line-height: 20px; }

    .status { display: flex; align-items: center; height: 27px; flex: none; background: #f1f1f1; border-top: 1px solid #ccc; padding: 4px 5px 0 6px; font-size: 17px; line-height: 22px; }
    .status .ids { display: flex; gap: 17px; }
    .status .bar-sep { width: 1px; height: 14px; background: #999; margin: 0 11px 0 12px; }
    .status .msg { flex: 1; }
    .status label { padding-right: 9px; }
    .vcb { width: 250px; align-self: stretch; border: 1px solid #a9b8c8; border-bottom: 0; background: #fff; font-size: 14px; }
  `;

  private toolButton([id, label]: Tool) {
    if (id === "|") return html`<span class="sep"></span>`;
    const name = id.replace("+", "");
    const button = html`<button class="tool" aria-label=${label} @click=${() => (this.tool = name)}>${icon(name)}</button>`;
    if (!id.endsWith("+")) return button;
    return html`<div class=${classMap({ combo: true, on: this.tool === name })}>
      ${button}<button class="drop" aria-label="${label} 옵션"><span class="tri"></span></button>
    </div>`;
  }

  private group(tools: Tool[]) {
    return html`<div class="group"><span class="grip"></span>${tools.map((t) => this.toolButton(t))}</div>`;
  }

  private scene() {
    return html`<svg class="scene" viewBox="90 113 1528 896" preserveAspectRatio="xMinYMin slice" role="img" aria-label="모델링 화면">
      <defs><linearGradient id="sky" x1="0" y1="0" x2="0" y2="1"><stop offset="0" stop-color="#d5dbdf"/><stop offset="1" stop-color="#eef1f2"/></linearGradient></defs>
      <rect x="89" y="113" width="1530" height="896" fill="#cdcdcc"/>
      <rect x="89" y="113" width="1530" height="89" fill="url(#sky)"/>
      <path d="M89 114h1530" stroke="#777"/>
      <g fill="none" stroke-width="1.200">
        <path d="M232 114 317 938" stroke="#1c1ca8"/>
        <path d="M317 938 1619 310" stroke="#2c9a2c"/>
        <path d="m317 938 152 71" stroke="#9c1d22"/>
        <g stroke-dasharray="1.500 3"><path d="M93 838 317 938" stroke="#b02a30"/><path d="m317 938 7 71" stroke="#1c1ca8"/></g>
        <path d="M317 938 176 1009" stroke="#1f7a1f" stroke-width="1" stroke-dasharray="1.200 4"/>
      </g>
      <path d="m678 316 79 4 10 602-72-24z" fill="#fff" stroke="#000" stroke-width="3" stroke-linejoin="round"/>
      <path d="M639 453c10-4 22-7 42-4-12 5-26 7-42 4z" fill="none" stroke="#2323b8" stroke-width="1.300"/>
      <path d="M656.500 443.500h7v8h-7z" fill="#94927e" stroke="#222" stroke-width="1.200"/>
      <path d="m639 454 3-7 14-13c2-1 5 1 4 3l-14 14z" fill="#d62a2e" stroke="#3a1010" stroke-width="1"/>
      <path d="m639 454 3-7 4 4z" fill="#ead9b8" stroke="#3a1010" stroke-width=".800"/>
      <circle cx="657" cy="436" r="1.800" fill="#ddd" stroke="#6b1a1c"/>
    </svg>`;
  }

  private nav(value: string, line: boolean) {
    return html`<div class="nav">
      <button aria-label="뒤로">${icon("prevArrow")}</button>
      <button aria-label="앞으로">${icon("nextArrow")}</button>
      <button aria-label="모델 내">${icon("home", "home")}</button>
      <div class=${classMap({ pickbox: true, line })}>
        <select aria-label="재질 모음"><option>${value}</option></select><span class="arrow"><span class="tri"></span></span>
      </div>
      <button aria-label="세부 정보">${icon("details")}</button>
    </div>`;
  }

  private tray() {
    return html`<aside class="tray">
      <div class="title"><span>기본 트레이</span>
        <svg class="pin" viewBox="0 0 12 12" aria-hidden="true"><path d="M4 1h5v6H4zM2 7h9M6 7v4M8 1v6" fill="none" stroke="#000" stroke-width="1.400"/></svg>
        <button class="x" aria-label="트레이 닫기">x</button></div>
      <div class="body">
        <div class="stack">
          <div class="bar"><i class="tri"></i><span>요소 정보</span><button aria-label="요소 정보 닫기">×</button></div>
          <div class="info"><div class="info-row">선택 없음${icon("pane", "sm")}</div><hr /></div>
          <div class="bar"><i class="tri"></i><span>재질</span><button aria-label="재질 닫기">×</button></div>
          <div class="mat">
            <div class="preview"><div class="diag"></div></div>
            <input class="name" aria-label="재질 이름" value="기본값" disabled />
            <div class="acts">${icon("paneUp", "sm")}${icon("addbox", "md")}<div class="diag"></div></div>
          </div>
          <div class="tabs">
            ${["선택", "편집"].map((t) => html`<button class=${classMap({ tab: true, on: this.tab === t })} @click=${() => (this.tab = t)}>${t}</button>`)}
            <button class="pick" aria-label="샘플 페인트">${icon("dropper", "md")}</button>
          </div>
          ${this.nav("색상", false)}
          <div class="list colors">
            <div class="grid">${SWATCHES.map((c) => html`<button class="sw" aria-label=${c}><i style="background:${c}"></i></button>`)}</div>
            <div class="scroll">${chevron(false)}<span class="thumb"></span>${chevron(true)}</div>
          </div>
          <div class="split"></div>
          <div class="sub">선택</div>
          ${this.nav("재질", true)}
          <div class="list folders">
            <div class="grid">${[1, 2, 3].map((n) => html`<button class="sw" aria-label="폴더 ${n}"><svg viewBox="0 0 38 34" aria-hidden="true">${ICONS.folder}</svg></button>`)}</div>
            <div class="scroll">${chevron(false)}<span class="thumb"></span></div>
          </div>
        </div>
        <div class="scroll">${chevron(false)}<span class="thumb"></span>${chevron(true)}</div>
      </div>
    </aside>`;
  }

  render() {
    return html`<div class="page">
      <nav class="menu">${MENUS.map((m) => html`<button>${m}</button>`)}</nav>
      <div class="bars">
        ${this.group(MAIN_TOOLS)}${this.group(VIEW_TOOLS)}${this.group(SOLID_TOOLS)}
        <div class="group"><span class="grip"></span>${this.toolButton(["shadow", "그림자"])}
          <div class="time">
            <div class="scale"><input class="range months" type="range" aria-label="날짜" value="86" />
              <div class="ticks">${[..."JFMAMJJASOND"].map((m) => html`<span>${m}</span>`)}</div></div>
            <div class="scale"><input class="range hours" type="range" aria-label="시간" value="63" />
              <div class="ticks wide"><span>07:08</span><span>정오</span><span>17:22</span></div></div>
          </div>
        </div>
      </div>
      <div class="main">
        <div class="side"><div class="palette"><div class="hgrip"></div>
          ${SIDE_TOOLS.map((set, i) => html`${i ? html`<div class="hsep"></div>` : nothing}
            <div class="cells">${set.map(([id, label]) => html`<button class=${classMap({ tool: true, on: this.tool === id })} aria-label=${label} @click=${() => (this.tool = id)}>${icon(id)}</button>`)}</div>`)}
        </div></div>
        <main class="view">${this.scene()}
          <div class="keys">${KEYS.map(([k, c]) => html`<div class="key ${c}">${k}</div>`)}</div>
        </main>
        ${this.tray()}
        <div class="shade"></div>
      </div>
      <footer class="status">
        <div class="ids">${icon("geo", "xs")}${icon("credit", "xs")}${icon("user", "xs")}</div>
        <span class="bar-sep"></span><span class="msg">첫 번째 모서리를 선택하십시오.</span>
        <span class="bar-sep"></span><label for="vcb">치수</label><input id="vcb" class="vcb" />
      </footer>
    </div>`;
  }
}
